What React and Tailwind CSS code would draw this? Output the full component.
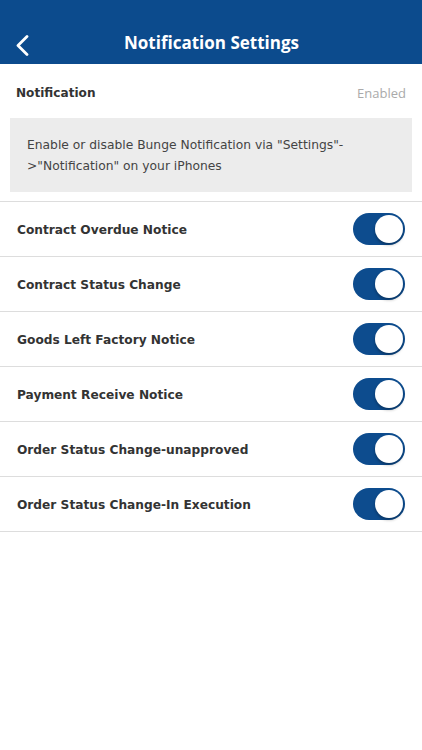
import React from "react";

const items = [
  "Contract Overdue Notice",
  "Contract Status Change",
  "Goods Left Factory Notice",
  "Payment Receive Notice",
  "Order Status Change-unapproved",
  "Order Status Change-In Execution",
];

function Toggle() {
  return (
    <div className="w-[52px] h-[32px] rounded-full bg-[#0d4c8e] relative">
      <div className="absolute right-[2px] top-[2px] w-[28px] h-[28px] rounded-full bg-white shadow-[0_2px_3px_rgba(0,0,0,0.3)]" />
    </div>
  );
}

export default function App() {
  return (
    <div className="w-[422px] h-[750px] bg-white" style={{ fontFamily: '"DejaVu Sans", sans-serif' }}>
      <div className="h-[64px] bg-[#0c4b8d] relative flex items-end pb-[10px]">
        <svg className="absolute left-[15px] top-[35px]" width="16" height="22" viewBox="0 0 16 22">
          <path d="M12 1.5 L3 10.5 L12 19.5" fill="none" stroke="white" strokeWidth="2.8" strokeLinecap="round" strokeLinejoin="round" />
        </svg>
        <div className="w-full text-center text-white text-[17px] font-bold leading-[22px] pl-[1px]" style={{ fontFamily: '"Open Sans", sans-serif' }}>
          Notification Settings
        </div>
      </div>
      <div className="h-[54px] flex items-center justify-between pl-[16px] pr-[16px]">
        <span className="text-[12.1px] font-bold text-[#333] pt-[4px]">Notification</span>
        <span className="text-[13px] text-[#aaa] pt-[5px]" style={{ fontFamily: '"Open Sans", sans-serif' }}>Enabled</span>
      </div>
      <div className="mx-[10px] h-[74px] bg-[#ececec] px-[17px] pt-[17px] text-[12.3px] leading-[21px] text-[#444]">
        Enable or disable Bunge Notification via "Settings"-<br />&gt;"Notification" on your iPhones
      </div>
      <div className="mt-[9px] border-t border-[#ddd]">
        {items.map((t) => (
          <div key={t} className="h-[55px] border-b border-[#ddd] flex items-center justify-between pl-[17px] pr-[17px]">
            <span className="text-[12.2px] font-bold text-[#333] pt-[3px]">{t}</span>
            <Toggle />
          </div>
        ))}
      </div>
    </div>
  );
}
